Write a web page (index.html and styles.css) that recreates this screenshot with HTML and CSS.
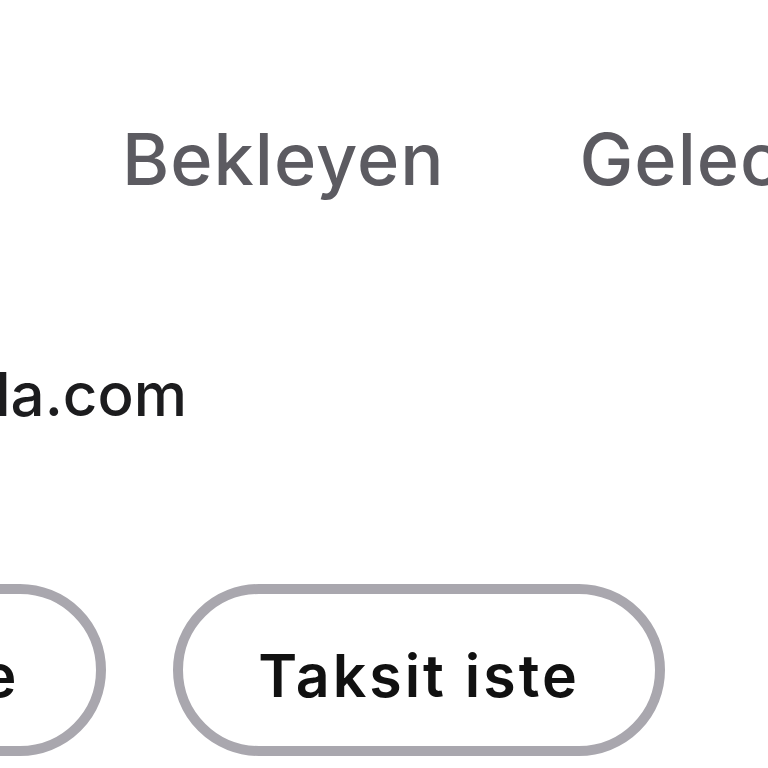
FILE: index.html
```html
<!DOCTYPE html>
<html lang="tr">
<head>
<meta charset="utf-8">
<link rel="stylesheet" href="styles.css">
</head>
<body>
<div class="screen">
  <nav class="tabs">
    <span class="tab">Bekleyen</span>
    <span class="tab">Gelecek</span>
  </nav>
  <div class="email-row">
    <span class="email">destek@tabilla.com</span>
  </div>
  <div class="actions">
    <button class="pill pill-cut">Ödeme iste</button>
    <button class="pill">Taksit iste</button>
  </div>
</div>
</body>
</html>
```
FILE: styles.css
```css
html, body {
  margin: 0;
  padding: 0;
  background: #ffffff;
}
.screen {
  width: 768px;
  height: 768px;
  overflow: hidden;
  font-family: Inter, "Noto Sans", sans-serif;
}
.tabs {
  display: flex;
  gap: 135px;
  padding: 123px 0 0 122px;
  white-space: nowrap;
}
.tab {
  font-size: 72px;
  line-height: 1;
  font-weight: 500;
  letter-spacing: 1px;
  color: #5c5b61;
}
.email-row {
  width: 187px;
  display: flex;
  justify-content: flex-end;
  overflow: hidden;
  margin-top: 169px;
}
.email {
  font-size: 60px;
  line-height: 1;
  font-weight: 500;
  color: #1c1c1e;
  white-space: nowrap;
}
.actions {
  display: flex;
  gap: 67px;
  margin-top: 160px;
  margin-left: -386px;
}
.pill {
  flex: none;
  width: 492px;
  height: 172px;
  border: 10px solid #a9a7ae;
  border-radius: 86px;
  background: #ffffff;
  font-family: Inter, "Noto Sans", sans-serif;
  font-size: 59px;
  font-weight: 600;
  letter-spacing: 3px;
  color: #111111;
  padding: 10px 0 0;
}
.pill-cut {
  padding-right: 34px;
}
```
